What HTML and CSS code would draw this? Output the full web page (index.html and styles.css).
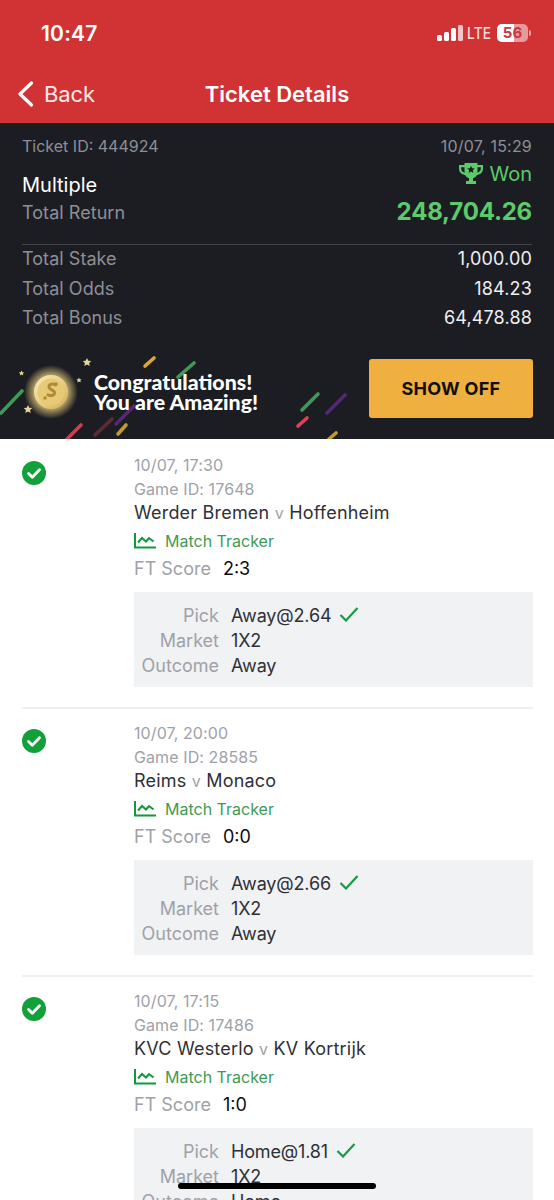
FILE: index.html
```html
<!DOCTYPE html>
<html lang="en">
<head>
<meta charset="utf-8">
<title>Ticket Details</title>
<link rel="stylesheet" href="styles.css">
</head>
<body>
<div class="page">
  <header class="header">
    <div class="status">
      <span class="time">10:47</span>
      <div class="status-right">
        <svg class="signal" width="26" height="16" viewBox="0 0 26 16"><rect x="0" y="10" width="5" height="6" rx="1.5" fill="#fff"/><rect x="7" y="7" width="5" height="9" rx="1.5" fill="#fff"/><rect x="14" y="3" width="5" height="13" rx="1.5" fill="#fff"/><rect x="21" y="0" width="5" height="16" rx="1.5" fill="#f3c5c5"/></svg>
        <span class="lte">LTE</span>
        <div class="battery"><div class="battery-fill"></div><span class="battery-num">56</span></div>
        <span class="battery-tip"></span>
      </div>
    </div>
    <nav class="nav">
      <div class="back">
        <svg width="17" height="26" viewBox="0 0 17 26"><path d="M14.500 2 L3 13 L14.500 24" fill="none" stroke="#fff" stroke-width="3.200" stroke-linecap="round" stroke-linejoin="round"/></svg>
        <span>Back</span>
      </div>
      <h1 class="title">Ticket Details</h1>
    </nav>
  </header>

  <section class="summary">
    <div class="summary-top">
      <div class="col">
        <div class="meta">Ticket ID: 444924</div>
        <div class="type">Multiple</div>
        <div class="label return-label">Total Return</div>
      </div>
      <div class="col col-right">
        <div class="meta meta-date">10/07, 15:29</div>
        <div class="won">
          <svg width="24" height="22" viewBox="0 0 24 22"><path fill="#5ccb6a" fill-rule="evenodd" d="M5.500 0h13v2H24v3.500c0 3.500-2.500 6-6.300 6.700-.9 1.500-2.200 2.500-3.700 3V18h3v3H7v-3h3v-2.800c-1.500-.5-2.800-1.500-3.700-3C2.500 11.500 0 9 0 5.500V2h5.500zM2.200 4.200v1.300c0 2 1.200 3.600 3.500 4.300-.2-1.100-.2-2.300-.2-3.500V4.200zm19.600 0h-3.300v2.100c0 1.200 0 2.400-.2 3.500 2.300-.7 3.500-2.300 3.500-4.300zM12 2.800l-1.100 2.500-2.700.2 2 1.800-.6 2.700 2.400-1.400 2.400 1.400-.6-2.700 2-1.800-2.700-.2z"/></svg>
          <span>Won</span>
        </div>
        <div class="amount">248,704.26</div>
      </div>
    </div>
    <div class="totals">
      <div class="total-row"><span class="label">Total Stake</span><span class="value">1,000.00</span></div>
      <div class="total-row"><span class="label">Total Odds</span><span class="value">184.23</span></div>
      <div class="total-row"><span class="label">Total Bonus</span><span class="value">64,478.88</span></div>
    </div>
    <div class="banner">
      <svg class="banner-art" width="554" height="110" viewBox="0 340 554 110">
        <defs>
          <radialGradient id="glow"><stop offset="50%" stop-color="#f7e08c" stop-opacity=".9"/><stop offset="100%" stop-color="#f2d67c" stop-opacity="0"/></radialGradient>
          <linearGradient id="coin" x1="0" y1="0" x2="1" y2="1"><stop offset="0" stop-color="#fbeeb8"/><stop offset="1" stop-color="#d9ae52"/></linearGradient>
        </defs>
        <g fill="none" stroke-width="3.600" stroke-linecap="round">
          <path d="M1 413 L22 391" stroke="#3f9a55"/>
          <path d="M145 366 L154 358" stroke="#d9a830"/>
          <path d="M178 377 L194 363" stroke="#3f9a55"/>
          <path d="M116 424 L134 406" stroke="#55267a"/>
          <path d="M95 435 L112 419" stroke="#5c2c35"/>
          <path d="M118 434 L126 425" stroke="#c49a2c"/>
          <path d="M67 439 L81 425" stroke="#d8394b"/>
          <path d="M302 410 L318 394" stroke="#3f9a55"/>
          <path d="M327 413 L345 395" stroke="#55267a"/>
          <path d="M298 426 L307 418" stroke="#e04055"/>
          <path d="M329 439 L336 433" stroke="#c49a2c"/>
        </g>
        <g fill="#e6d69c">
          <path d="M87 358l1.300 2.800 3 .3-2.200 2 .6 3-2.700-1.500-2.700 1.500.6-3-2.200-2 3-.3z"/>
          <path d="M28 405l1.300 2.800 3 .3-2.200 2 .6 3-2.700-1.500-2.700 1.500.6-3-2.200-2 3-.3z"/>
          <path d="M21.500 370.500l.8 1.700 1.900.2-1.400 1.300.4 1.800-1.700-.9-1.700.9.4-1.800-1.400-1.300 1.900-.2z"/>
          <path d="M79 377.500l.8 1.700 1.900.2-1.400 1.300.4 1.800-1.700-.9-1.700.9.4-1.800-1.400-1.300 1.900-.2z"/>
        </g>
        <circle cx="51" cy="392" r="27" fill="url(#glow)"/>
        <circle cx="51" cy="392" r="17" fill="url(#coin)"/>
        <circle cx="51" cy="392" r="13.500" fill="#e6ca75"/>
        <path d="M55.500 385c-3-1.700-6.500-.8-6.500 1.800 0 3.400 5.500 2.600 5.500 6 0 2.800-3.500 3.500-6.500 2" fill="none" stroke="#b08a38" stroke-width="3" stroke-linecap="round"/>
        <circle cx="56" cy="384" r="1.800" fill="#b08a38"/>
        <circle cx="45" cy="398" r="1.800" fill="#b08a38"/>
      </svg>
      <div class="congrats">Congratulations!<br>You are Amazing!</div>
      <button class="show-off">SHOW OFF</button>
    </div>
  </section>

  <main class="list">
    <article class="item">
      <svg class="ok" width="24" height="24" viewBox="0 0 24 24"><circle cx="12" cy="12" r="12" fill="#12a03a"/><path d="M6.500 12.500l3.800 3.800 7.200-7.500" fill="none" stroke="#fff" stroke-width="2.800" stroke-linecap="round" stroke-linejoin="round"/></svg>
      <div class="detail">
        <div class="sub">10/07, 17:30</div>
        <div class="sub">Game ID: 17648</div>
        <div class="teams">Werder Bremen <span class="vs">v</span> Hoffenheim</div>
        <div class="tracker">
          <svg width="22" height="16" viewBox="0 0 22 16"><path d="M1 0v14.500h21M4 9.500l4-4.500 4 3.500 3-3.500 4.500 3.500" fill="none" stroke="#12973a" stroke-width="2"/></svg>
          <span>Match Tracker</span>
        </div>
        <div class="score"><span class="score-label">FT Score</span><span class="score-value">2:3</span></div>
        <div class="pick-box">
          <span class="pick-label">Pick</span><span class="pick-value">Away@2.64 <svg class="tick" width="20" height="16" viewBox="0 0 20 16"><path d="M1.500 9l5.500 5.500L18.500 2" fill="none" stroke="#1a9a46" stroke-width="2.200"/></svg></span>
          <span class="pick-label">Market</span><span class="pick-value">1X2</span>
          <span class="pick-label">Outcome</span><span class="pick-value">Away</span>
        </div>
      </div>
    </article>
    <article class="item">
      <svg class="ok" width="24" height="24" viewBox="0 0 24 24"><circle cx="12" cy="12" r="12" fill="#12a03a"/><path d="M6.500 12.500l3.800 3.800 7.200-7.500" fill="none" stroke="#fff" stroke-width="2.800" stroke-linecap="round" stroke-linejoin="round"/></svg>
      <div class="detail">
        <div class="sub">10/07, 20:00</div>
        <div class="sub">Game ID: 28585</div>
        <div class="teams">Reims <span class="vs">v</span> Monaco</div>
        <div class="tracker">
          <svg width="22" height="16" viewBox="0 0 22 16"><path d="M1 0v14.500h21M4 9.500l4-4.500 4 3.500 3-3.500 4.500 3.500" fill="none" stroke="#12973a" stroke-width="2"/></svg>
          <span>Match Tracker</span>
        </div>
        <div class="score"><span class="score-label">FT Score</span><span class="score-value">0:0</span></div>
        <div class="pick-box">
          <span class="pick-label">Pick</span><span class="pick-value">Away@2.66 <svg class="tick" width="20" height="16" viewBox="0 0 20 16"><path d="M1.500 9l5.500 5.500L18.500 2" fill="none" stroke="#1a9a46" stroke-width="2.200"/></svg></span>
          <span class="pick-label">Market</span><span class="pick-value">1X2</span>
          <span class="pick-label">Outcome</span><span class="pick-value">Away</span>
        </div>
      </div>
    </article>
    <article class="item">
      <svg class="ok" width="24" height="24" viewBox="0 0 24 24"><circle cx="12" cy="12" r="12" fill="#12a03a"/><path d="M6.500 12.500l3.800 3.800 7.200-7.500" fill="none" stroke="#fff" stroke-width="2.800" stroke-linecap="round" stroke-linejoin="round"/></svg>
      <div class="detail">
        <div class="sub">10/07, 17:15</div>
        <div class="sub">Game ID: 17486</div>
        <div class="teams">KVC Westerlo <span class="vs">v</span> KV Kortrijk</div>
        <div class="tracker">
          <svg width="22" height="16" viewBox="0 0 22 16"><path d="M1 0v14.500h21M4 9.500l4-4.500 4 3.500 3-3.500 4.500 3.500" fill="none" stroke="#12973a" stroke-width="2"/></svg>
          <span>Match Tracker</span>
        </div>
        <div class="score"><span class="score-label">FT Score</span><span class="score-value">1:0</span></div>
        <div class="pick-box">
          <span class="pick-label">Pick</span><span class="pick-value">Home@1.81 <svg class="tick" width="20" height="16" viewBox="0 0 20 16"><path d="M1.500 9l5.500 5.500L18.500 2" fill="none" stroke="#1a9a46" stroke-width="2.200"/></svg></span>
          <span class="pick-label">Market</span><span class="pick-value">1X2</span>
          <span class="pick-label">Outcome</span><span class="pick-value">Home</span>
        </div>
      </div>
    </article>
  </main>
  <div class="home-indicator"></div>
</div>
</body>
</html>
```

FILE: styles.css
```css
* { box-sizing: border-box; }
html, body { margin: 0; padding: 0; background: #fff; }
body { font-family: Inter, "Liberation Sans", sans-serif; }
.page { position: relative; width: 554px; height: 1200px; overflow: hidden; }

.header { height: 123px; background: #d13334; color: #fff; }
.status { height: 66px; padding: 21px 23px 0 41px; display: flex; justify-content: space-between; align-items: flex-start; }
.time { margin-top: 1px; font-size: 21px; line-height: 24px; font-weight: 600; letter-spacing: .2px; }
.status-right { display: flex; align-items: center; height: 24px; }
.signal { margin-right: 4px; }
.lte { font-size: 16px; font-weight: 500; letter-spacing: .3px; color: #f8dcdc; margin-right: 5px; width: 25px; transform: scaleX(.85); transform-origin: left; }
.battery { position: relative; width: 31px; height: 18px; border-radius: 5px; background: rgba(255,255,255,.5); overflow: hidden; }
.battery-fill { width: 17px; height: 18px; background: #fff; }
.battery-num { position: absolute; top: 0; left: 0; width: 100%; text-align: center; font-size: 15px; line-height: 18px; font-weight: 700; color: #c43a42; }
.battery-tip { width: 2px; height: 6px; margin-left: 1px; background: rgba(255,255,255,.6); border-radius: 0 2px 2px 0; }

.nav { position: relative; height: 55px; display: flex; align-items: center; justify-content: center; }
.back { position: absolute; left: 17px; top: 0; height: 55px; display: flex; align-items: center; gap: 10px; font-size: 22px; letter-spacing: -.1px; }
.back span { color: #fbe9e9; }
.title { margin: 0; font-size: 22px; font-weight: 600; }

.summary { background: #1c1d23; height: 316px; padding: 13px 22px 0; display: flex; flex-direction: column; }
.summary-top { display: flex; justify-content: space-between; height: 109px; border-bottom: 1px solid #44454b; }
.col { display: flex; flex-direction: column; }
.col-right { align-items: flex-end; }
.meta { font-size: 16px; line-height: 20px; color: #8e8f96; }
.meta-date { letter-spacing: .2px; }
.type { margin-top: 15px; font-size: 20px; line-height: 28px; color: #fff; }
.label { font-size: 18px; color: #8e8f96; letter-spacing: .05px; }
.return-label { line-height: 28px; }
.won { margin-top: 5px; height: 26px; display: flex; align-items: center; gap: 7px; font-size: 20px; color: #5ccb6a; }
.amount { margin-top: 10px; font-size: 24px; line-height: 30px; font-weight: 700; color: #5ccb6a; letter-spacing: -.2px; }
.totals { display: grid; grid-auto-rows: 29.5px; margin-top: -1px; }
.total-row { display: flex; justify-content: space-between; align-items: center; }
.value { font-size: 18px; color: #efeff1; letter-spacing: .15px; }

.banner { position: relative; flex: 1; margin: 0 -22px; padding: 0 21px 0 94px; display: flex; align-items: center; justify-content: space-between; overflow: hidden; }
.banner-art { position: absolute; left: 0; bottom: -11px; }
.congrats { position: relative; font-family: Lato, sans-serif; font-size: 21.3px; line-height: 20px; font-weight: 900; color: #fff; margin-top: 12px; }
.show-off { position: relative; width: 164px; height: 59px; margin-top: 5px; border: 0; border-radius: 3px; background: #f0b040; color: #100f0c; font-family: Inter, sans-serif; font-size: 18px; font-weight: 700; letter-spacing: .3px; }

.list { padding-top: 2px; }
.item { margin: 0 21px 0 22px; padding: 12px 0 20px; border-bottom: 2px solid #f0f0f1; display: flex; }
.ok { flex: none; margin: 8px 88px 0 0; }
.detail { flex: 1; }
.sub { font-size: 16px; line-height: 24px; color: #a0a1a8; letter-spacing: .1px; }
.teams { font-size: 18px; line-height: 24px; color: #2f3038; letter-spacing: .2px; }
.vs { color: #a0a1a8; font-size: 16px; }
.tracker { margin-top: 2px; height: 28px; display: flex; align-items: center; gap: 9px; font-size: 16px; color: #3f9a55; }
.score { height: 26px; display: flex; align-items: center; gap: 12px; font-size: 18px; }
.score-label { color: #a0a1a8; }
.score-value { color: #0c0c10; }
.pick-box { margin-top: 11px; height: 95px; padding: 10.5px 0 0; background: #f1f2f4; display: grid; grid-template-columns: 85px 1fr; grid-auto-rows: 25px; column-gap: 12px; font-size: 18px; }
.pick-label { text-align: right; color: #a0a1a8; line-height: 25px; }
.pick-value { color: #2f3038; line-height: 25px; display: flex; align-items: center; gap: 8px; letter-spacing: -.15px; }
.tick { margin-top: -3px; }

.home-indicator { position: absolute; left: 178px; top: 1183px; width: 198px; height: 6px; border-radius: 3px; background: #000; }
```
